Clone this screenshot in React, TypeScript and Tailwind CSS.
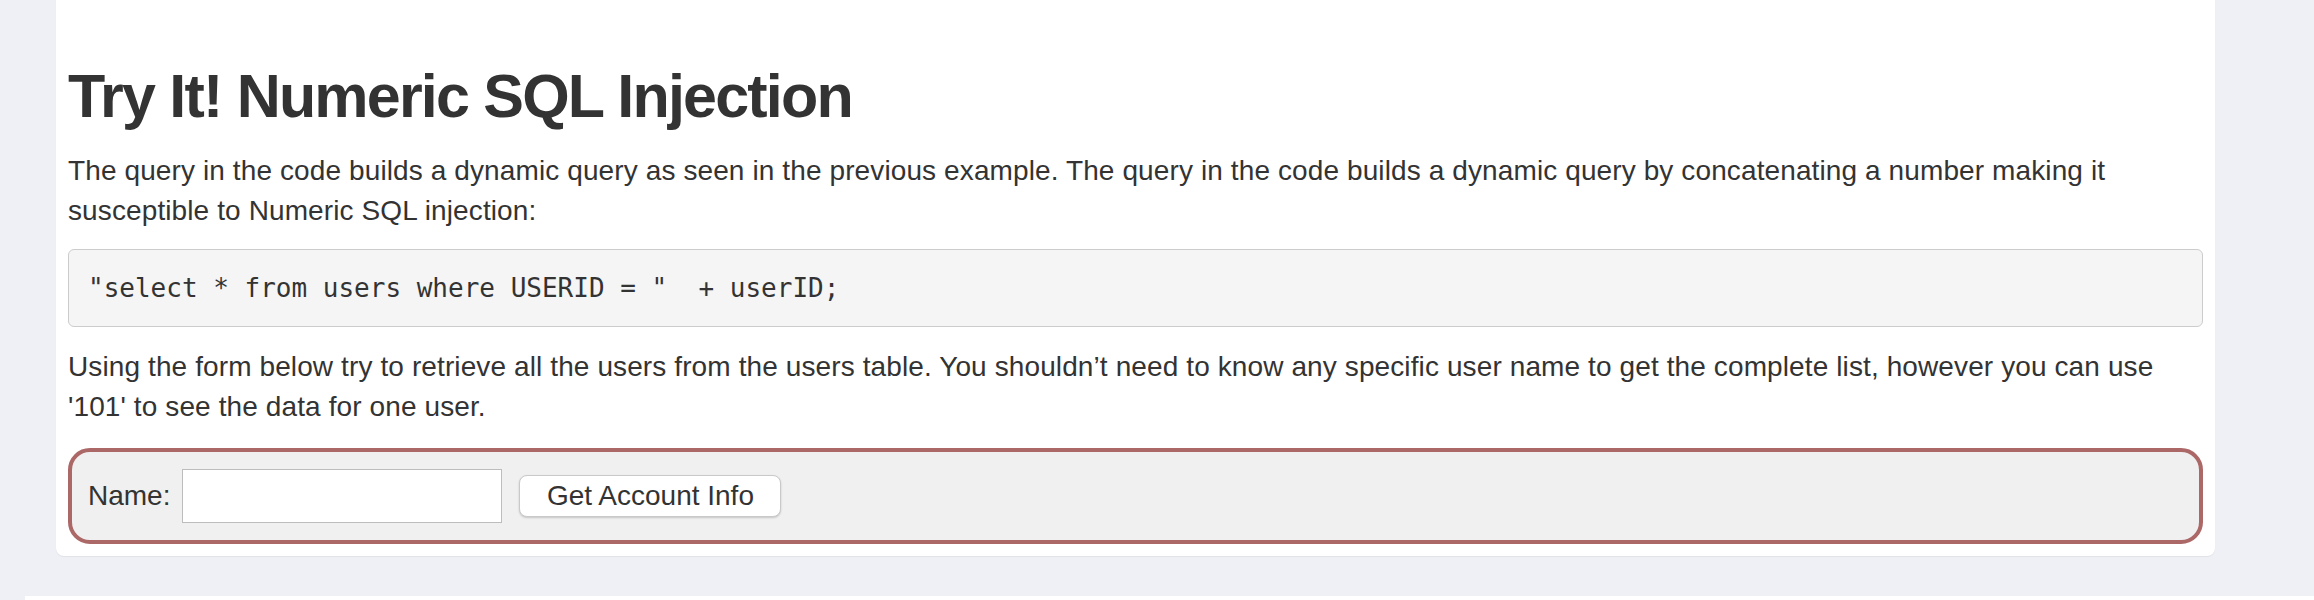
import React from 'react';

const sans = { fontFamily: '"Liberation Sans", Arial, sans-serif' };

export default function App() {
  return (
    <div className="h-[600px] w-full overflow-hidden bg-[#eff0f5]">
      {/* lesson card, its top is scrolled off */}
      <div className="ml-[56px] w-[2159px] rounded-b-[8px] bg-white px-[12px] pb-[12px] pt-[62px] shadow-[0_1px_1px_rgba(0,0,0,0.06)] text-[#333333]">
        <h1 className="h-[69px] font-['Liberation_Sans',Arial,sans-serif] text-[61px] font-bold leading-[69px] tracking-[-1.8px] text-[#333333]">
          Try It! Numeric SQL Injection
        </h1>

        <p className="mt-[20px] mb-[18px] font-['Liberation_Sans',Arial,sans-serif] text-[28px] leading-[40px] tracking-[0.11px]">
          The query in the code builds a dynamic query as seen in the previous example. The query in the code builds a
          dynamic query by concatenating a number making it susceptible to Numeric SQL injection:
        </p>

        <pre className="flex h-[78px] items-center rounded-[6px] border border-[#cccccc] bg-[#f5f5f5] px-[19px] font-['DejaVu_Sans_Mono',monospace] text-[26px] leading-[37px] text-[#333333]">
          {'"select * from users where USERID = "  + userID;'}
        </pre>

        <p className="mt-[20px] mb-[21px] font-['Liberation_Sans',Arial,sans-serif] text-[28px] leading-[40px] tracking-[0.11px]">
          Using the form below try to retrieve all the users from the users table. You shouldn’t need to know any
          specific user name to get the complete list, however you can use '101' to see the data for one user.
        </p>

        <form
          onSubmit={e => e.preventDefault()}
          className="flex h-[96px] items-center rounded-[22px] border-4 border-[#ac6767] bg-[#f0f0f0] pl-[16px]"
          style={sans}
        >
          <label className="text-[28px] leading-[40px] text-[#333333]">Name:</label>
          <input
            type="text"
            className="ml-[12px] h-[54px] w-[320px] border border-[#bdbdbd] bg-white px-2 text-[28px] outline-none"
          />
          <button
            type="submit"
            className="ml-[17px] flex h-[42px] w-[262px] items-center justify-center rounded-[8px] border border-[#c9c9c9] bg-white text-[28px] leading-[40px] text-[#333333] shadow-[0_1px_2px_rgba(0,0,0,0.18)]"
          >
            Get Account Info
          </button>
        </form>
      </div>

      <div className="ml-[25px] mt-[40px] h-[4px] bg-white" />
    </div>
  );
}
